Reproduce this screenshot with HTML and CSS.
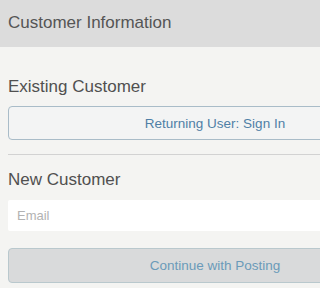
FILE: index.html
```html
<!DOCTYPE html>
<html>
<head>
<meta charset="utf-8">
<link rel="stylesheet" href="styles.css">
</head>
<body>
<div class="viewport">
  <div class="page">
    <div class="header">Customer Information</div>
    <div class="content">
      <h2 class="section-title first">Existing Customer</h2>
      <button class="btn btn-signin">Returning User: Sign In</button>
      <hr class="divider">
      <h2 class="section-title">New Customer</h2>
      <input class="email" type="text" placeholder="Email">
      <button class="btn btn-continue">Continue with Posting</button>
    </div>
  </div>
</div>
</body>
</html>
```
FILE: styles.css
```css
html, body {
  margin: 0;
  padding: 0;
  overflow: hidden;
  background: #f4f4f2;
}
.viewport {
  width: 100%;
  height: 100vh;
  overflow: hidden;
}
.page {
  width: 430px;
  font-family: "Liberation Sans", Arial, sans-serif;
  background: #f4f4f2;
}
.header {
  background: #dcdcdc;
  color: #555555;
  font-size: 17px;
  line-height: 19px;
  padding: 13px 8px 15px;
}
.content {
  padding: 0 8px;
  display: flex;
  flex-direction: column;
}
.section-title {
  margin: 0;
  font-weight: normal;
  font-size: 17px;
  line-height: 19px;
  color: #505050;
}
.section-title.first {
  margin-top: 30px;
}
.btn {
  display: block;
  width: 100%;
  box-sizing: border-box;
  font-family: "Liberation Sans", Arial, sans-serif;
  font-size: 13.5px;
  text-align: center;
  border-radius: 4px;
  padding: 0;
}
.btn-signin {
  margin-top: 10px;
  height: 34px;
  background: #f3f4f4;
  border: 1px solid #a9bcc8;
  color: #4f7fa6;
}
.divider {
  margin: 14px 0 15px;
  border: 0;
  border-top: 1px solid #d2d2d2;
  height: 0;
}
.email {
  margin-top: 11px;
  height: 31px;
  box-sizing: border-box;
  border: 0;
  border-radius: 2px;
  background: #ffffff;
  padding: 0 9px;
  font-family: "Liberation Sans", Arial, sans-serif;
  font-size: 13px;
  outline: none;
}
.email::placeholder {
  color: #b2b2b2;
}
.btn-continue {
  margin-top: 17px;
  height: 35px;
  background: #d9dadb;
  border: 1px solid #b9c8cd;
  color: #6b9ab9;
}
```
